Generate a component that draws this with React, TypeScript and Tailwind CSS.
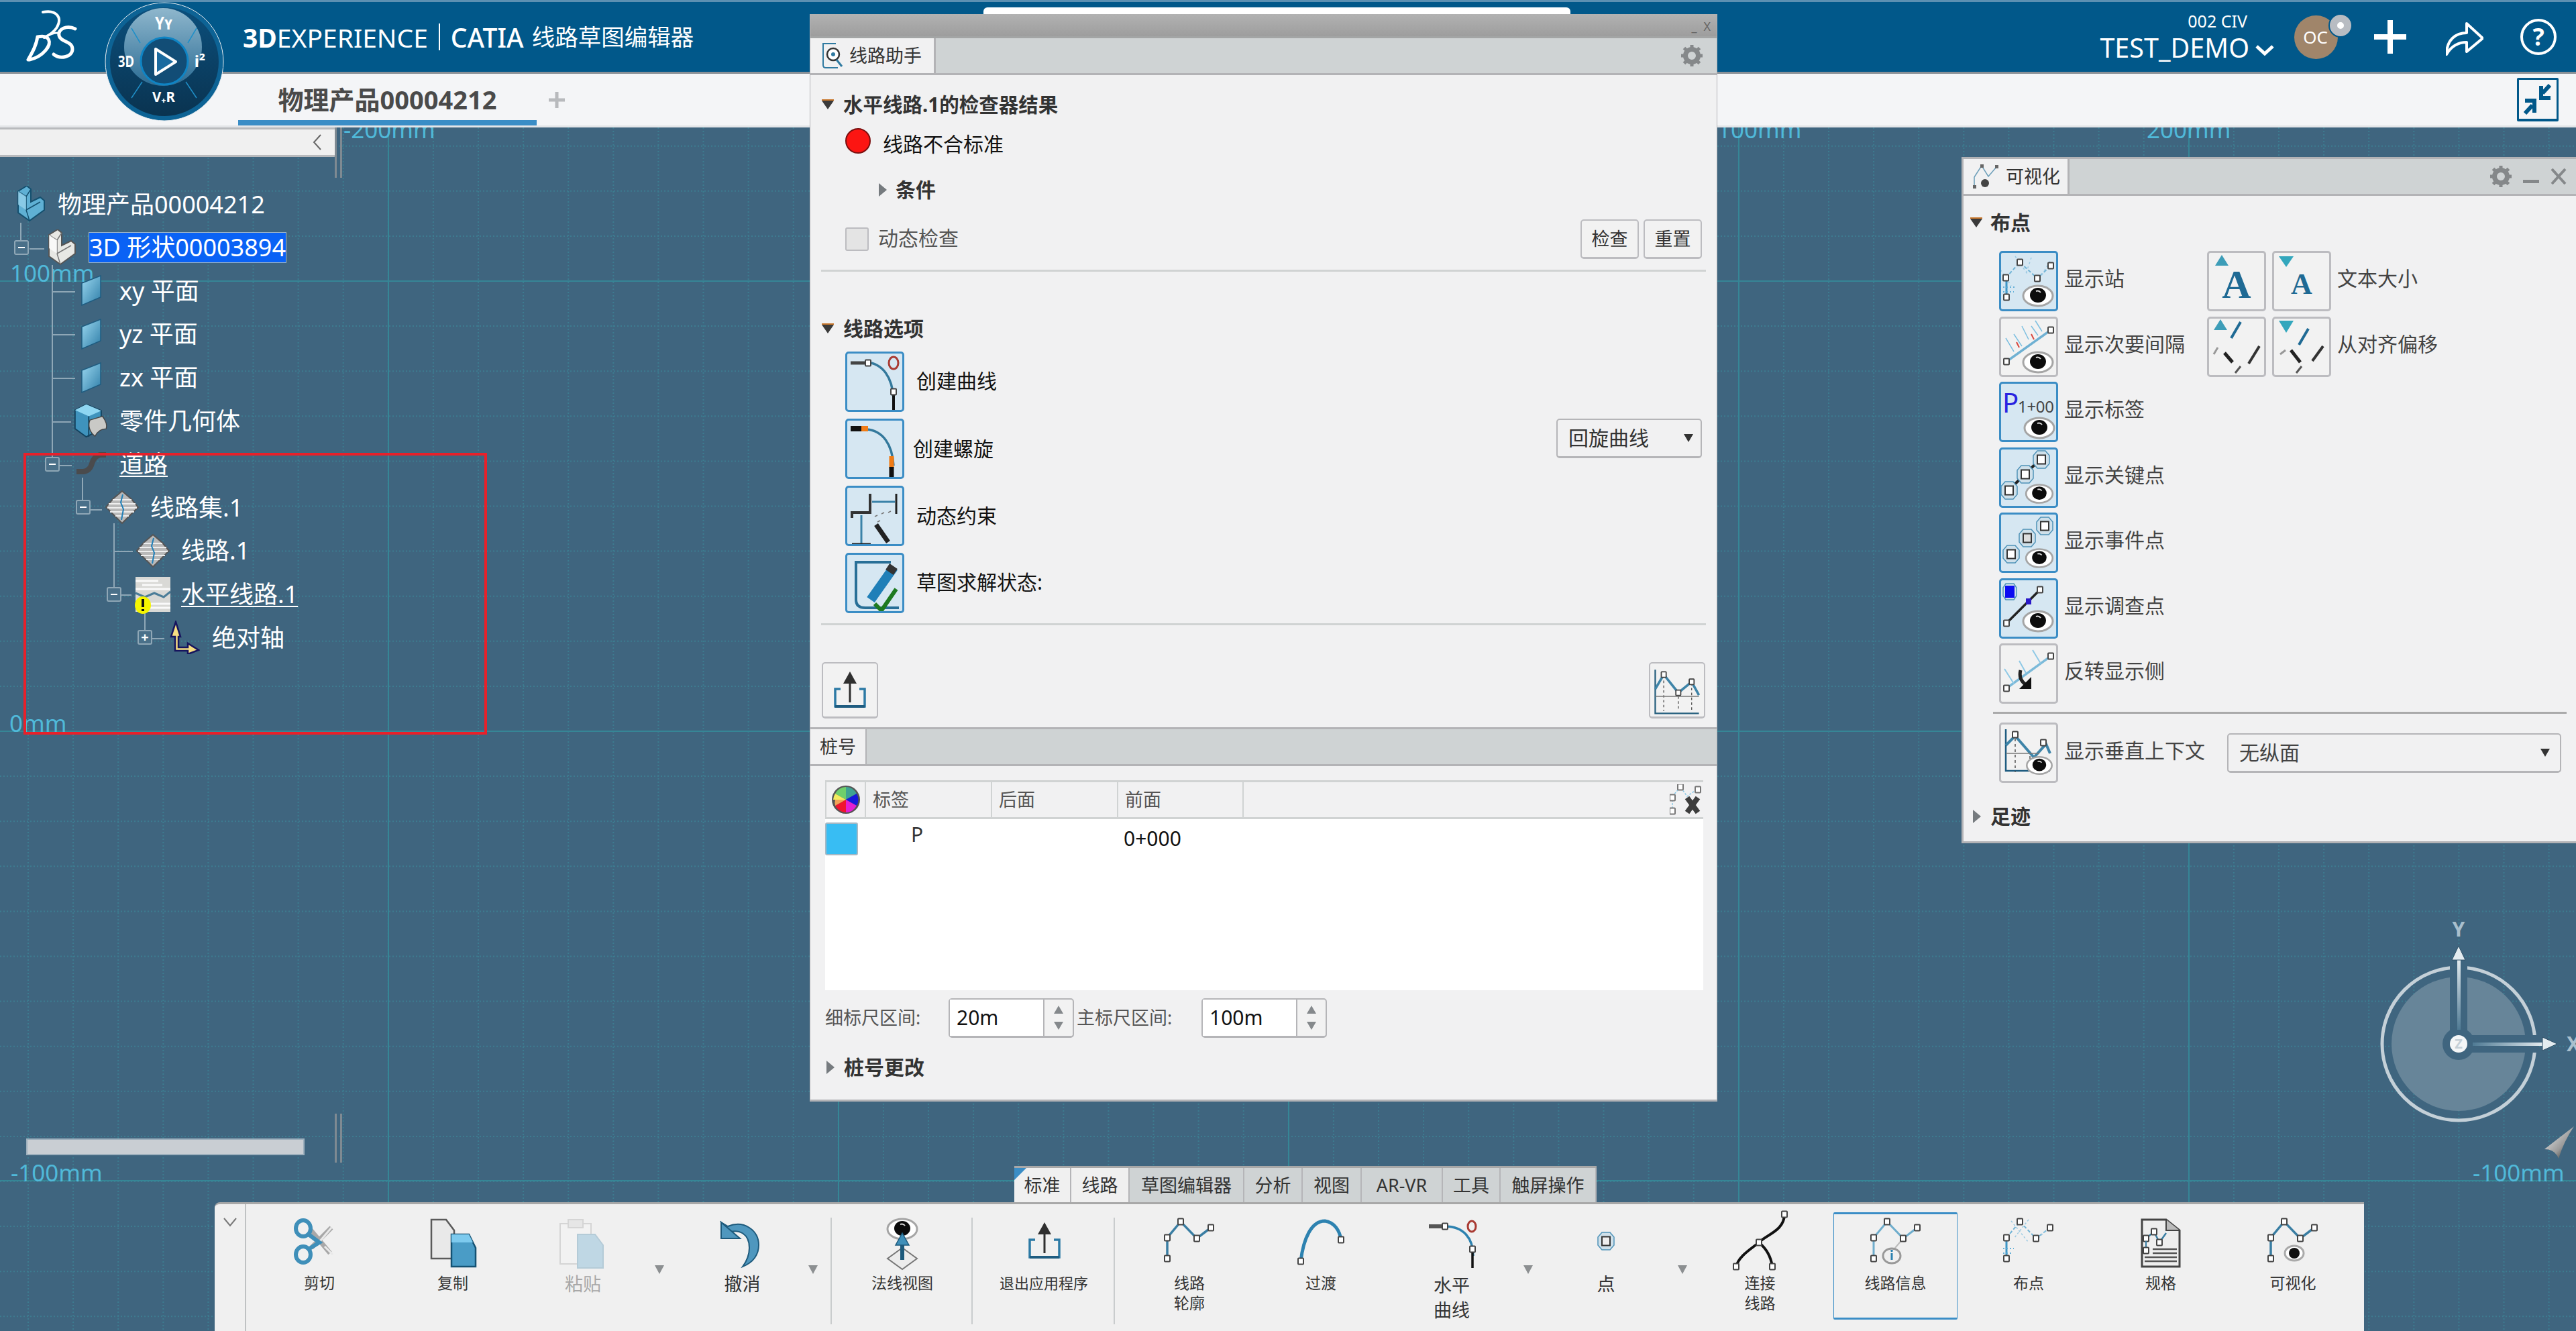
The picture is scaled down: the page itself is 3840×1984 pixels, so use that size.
import React from "react";

// grid of the sketch canvas, page coordinates
const MAJOR_X = [579, 1250, 1921, 2592, 3263];
const MAJOR_Y = [419, 1090, 1760];
const MINOR_X = Array.from({ length: 58 }, (_, i) => 42 + i * 67.1);
const MINOR_Y = Array.from({ length: 30 }, (_, i) => 16.4 + i * 67.1);

const Node = ({ x, y, c = "#444" }: { x: number; y: number; c?: string }) => (
  <rect x={x - 4} y={y - 4.5} width={8} height={9} rx={1} fill="#fff" stroke={c} strokeWidth={2} />
);

const Eye = ({ x, y, s = 1 }: { x: number; y: number; s?: number }) => (
  <g transform={`translate(${x} ${y}) scale(${s})`}>
    <ellipse rx={22} ry={15} fill="#fff" stroke="#a5a5a5" strokeWidth={3} />
    <ellipse cy={-1} rx={12} ry={11} fill="#0c0c0c" />
    <path d="M-3-7a6 6 0 0 1 7 2" stroke="#ddd" fill="none" strokeWidth={2} />
  </g>
);

const Hex = ({ x, y, c = "#fff" }: { x: number; y: number; c?: string }) => (
  <g>
    <path d={`M${x - 6} ${y - 13}h12l6 7v12l-6 7h-12l-6-7v-12z`} fill="#cfe0ea" stroke="#4f93b8" strokeWidth={1.5} />
    <rect x={x - 6} y={y - 6.5} width={12} height={13} fill={c} stroke="#333" strokeWidth={2} />
  </g>
);

const TriDown = () => (
  <svg width="20" height="16" viewBox="0 0 20 16" className="shrink-0">
    <path d="M1 2h18L10 15z" fill="#3a3a3a" />
    <path d="M1 1h18" stroke="#c9772c" strokeWidth="2" />
  </svg>
);

const TriRight = () => (
  <svg width="14" height="22" viewBox="0 0 14 22" className="shrink-0">
    <path d="M1 1l12 10L1 21z" fill="#767b7f" />
  </svg>
);

const Caret = () => (
  <svg width="16" height="14" viewBox="0 0 16 14" className="shrink-0">
    <path d="M1 1h14L8 13z" fill="#333" />
  </svg>
);

const Gear = ({ c = "#85888a" }: { c?: string }) => (
  <svg width="34" height="34" viewBox="0 0 34 34">
    <circle cx="17" cy="17" r="9.5" fill="none" stroke={c} strokeWidth="7" />
    <path d="M17 1v6M17 27v6M1 17h6M27 17h6M5.5 5.5l4 4M24.500 24.500l4 4M5.500 28.500l4-4M24.500 9.500l4-4" stroke={c} strokeWidth="5" />
  </svg>
);

const ChartLines = () => (
  <g fill="none">
    <path d="M6 8v72h72" stroke="#27607f" strokeWidth="2.500" />
    <path d="M20 18v58M44 44v32M66 30v46" stroke="#555" strokeWidth="1.500" strokeDasharray="4 4" />
    <path d="M6 40L20 16 44 46 66 28 78 50" stroke="#3e84a8" strokeWidth="4" />
    <path d="M6 52h72" stroke="#777" strokeWidth="1.500" />
    <Node x={20} y={16} />
    <Node x={44} y={46} />
    <Node x={66} y={28} />
  </g>
);

// ---- assistant panel icons ----
const CurveIcon = ({ orange }: { orange?: boolean }) => (
  <svg viewBox="3 3 82 84" className="block h-full w-full">
    <path d="M32 16c24 2 38 22 40 54" fill="none" stroke="#34799c" strokeWidth="3.500" />
    {orange ? (
      <g>
        <path d="M8 15h20" stroke="#111" strokeWidth="8" />
        <path d="M24 15h10" stroke="#f07c16" strokeWidth="8" />
        <path d="M69 56v18" stroke="#f07c16" strokeWidth="7" />
        <path d="M69 72v20" stroke="#111" strokeWidth="7" />
      </g>
    ) : (
      <g>
        <path d="M8 17h24" stroke="#444" strokeWidth="5" />
        <Node x={34} y={17} />
        <ellipse cx="72" cy="17" rx="7" ry="9" fill="none" stroke="#a93b33" strokeWidth="3" />
        <path d="M72 64v24" stroke="#111" strokeWidth="4" />
        <Node x={72} y={60} />
      </g>
    )}
  </svg>
);

const ConstraintIcon = () => (
  <svg viewBox="3 3 82 84" className="block h-full w-full" fill="none">
    <path d="M37 12v28H10v8" stroke="#333" strokeWidth="4" />
    <path d="M76 12v30" stroke="#222" strokeWidth="3" />
    <path d="M40 24h34" stroke="#3a82a8" strokeWidth="3" />
    <path d="M24 44v42" stroke="#3a82a8" strokeWidth="3" />
    <path d="M10 88h28" stroke="#222" strokeWidth="5" />
    <path d="M46 58l18 26" stroke="#222" strokeWidth="7" />
    <path d="M44 46l4-2M54 42l4-2M64 40l4-2M48 54l4-2" stroke="#777" strokeWidth="1.500" />
  </svg>
);

const SolveIcon = () => (
  <svg viewBox="3 3 82 84" className="block h-full w-full" fill="none">
    <path d="M68 14H16v56q0 12 14 12h50" stroke="#286f97" strokeWidth="4" />
    <path d="M72 22L38 70" stroke="#1f7fb8" strokeWidth="14" />
    <path d="M72 20l-6 9" stroke="#333" strokeWidth="14" />
    <path d="M44 76l10 10 22-32" stroke="#1e7a20" strokeWidth="6" />
  </svg>
);

const ExitIcon = ({ s = 1 }: { s?: number }) => (
  <svg width={50 * s} height={56 * s} viewBox="0 0 50 56" fill="none">
    <path d="M25 6v40" stroke="#2f2f2f" strokeWidth="3" />
    <path d="M15 18L25 0l10 18z" fill="#2f2f2f" />
    <path d="M11 26H3v26h44V26h-8" stroke="#2d7aa5" strokeWidth="3.500" />
    <path d="M3 52h44" stroke="#1f5c80" strokeWidth="4" />
  </svg>
);

const TabRouteIcon = () => (
  <svg width="36" height="40" viewBox="0 0 36 40" fill="none">
    <path d="M22 2H3v32q0 4 4 4h18" stroke="#2f7aa1" strokeWidth="2" />
    <circle cx="18" cy="18" r="9" fill="#fff" stroke="#333" strokeWidth="2.500" />
    <circle cx="18" cy="18" r="3" fill="#2f7aa1" />
    <path d="M23 26l8 10" stroke="#2f7aa1" strokeWidth="3" />
  </svg>
);

// ---- visualization panel icons ----
const PtsBase = () => (
  <g fill="none">
    <path d="M10 40L31 17l26 24 20-19" stroke="#70b3d6" strokeWidth="2" strokeDasharray="5 3" />
    <path d="M2 28l16 24M24 8l18 26M48 10l-8 24M60 42l18-30" stroke="#9ccae2" strokeWidth="1.500" strokeDasharray="3 4" />
    <path d="M11 40v29" stroke="#3d95c6" strokeWidth="3" />
    <path d="M6 54h18M6 61h16" stroke="#66b0d8" strokeWidth="2" strokeDasharray="2 3" />
    <Node x={10} y={40} />
    <Node x={31} y={17} />
    <Node x={57} y={41} />
    <Node x={77} y={22} />
    <Node x={11} y={69} />
  </g>
);

const viewIcons: Record<string, React.ReactNode> = {
  station: (
    <>
      <PtsBase />
      <Eye x={58} y={67} />
    </>
  ),
  minor: (
    <g fill="none">
      <path d="M11 67L77 20" stroke="#6fb1d3" strokeWidth="3.500" />
      <path d="M10 32l12 20M22 26l12 18M34 14l10 20M48 14l10 14M54 6l10 16" stroke="#7dbfe0" strokeWidth="1.500" />
      <path d="M26 38l4 8M48 26l4 8" stroke="#d8483f" strokeWidth="2" />
      <Node x={11} y={67} />
      <Node x={77} y={20} />
      <Eye x={58} y={68} />
    </g>
  ),
  label: (
    <>
      <text x="5" y="46" fontSize="40" fill="#2a23e0" fontFamily="Noto Sans">P</text>
      <text x="28" y="46" fontSize="24" fill="#444" fontFamily="Noto Sans" textLength="54">1+00</text>
      <Eye x={60} y={69} />
    </>
  ),
  key: (
    <>
      <path d="M15 63L63 16" stroke="#222" strokeWidth="4" />
      <Hex x={63} y={18} />
      <Hex x={39} y={40} />
      <Hex x={15} y={64} />
      <Eye x={60} y={69} s={0.9} />
    </>
  ),
  event: (
    <>
      <Hex x={68} y={20} />
      <Hex x={42} y={38} c="#ddd" />
      <Hex x={18} y={62} />
      <Eye x={60} y={68} s={0.9} />
    </>
  ),
  survey: (
    <g fill="none">
      <path d="M11 67L61 17" stroke="#222" strokeWidth="3.500" />
      <path d="M10 8h12l4 6v12l-4 6H10l-4-6V14z" fill="#cfe0ea" stroke="#4f93b8" strokeWidth="1.500" />
      <rect x="9" y="11" width="14" height="18" fill="#0b0bf2" />
      <rect x="40" y="30" width="8" height="9" fill="#2a18c8" />
      <Node x={11} y={67} />
      <Node x={61} y={17} />
      <Eye x={58} y={64} />
    </g>
  ),
  flip: (
    <g fill="none">
      <path d="M11 67L77 19" stroke="#7cbad9" strokeWidth="3.500" />
      <path d="M8 38l14 22M30 26l10 18M50 10l12 20" stroke="#8fc9e6" strokeWidth="2" />
      <Node x={11} y={67} />
      <Node x={77} y={19} />
      <path d="M32 40q-4 16 12 24" stroke="#222" strokeWidth="5" />
      <path d="M30 68h18V50z" fill="#111" />
    </g>
  ),
  vertical: (
    <g fill="none">
      <path d="M10 10v62h66" stroke="#1f5c80" strokeWidth="2.500" />
      <path d="M24 24v50M46 50v24" stroke="#555" strokeWidth="1.500" strokeDasharray="4 4" />
      <path d="M10 34l14-14 28 32 18-20 6 14" stroke="#3e84a8" strokeWidth="4" />
      <path d="M10 46h50" stroke="#777" strokeWidth="1.500" />
      <Node x={24} y={18} />
      <Node x={66} y={30} />
      <Eye x={60} y={64} s={0.85} />
    </g>
  ),
  bigA: (
    <>
      <path d="M12 22l10-16 10 16z" fill="#3d9db8" />
      <text x="44" y="70" fontSize="60" fontWeight="700" fill="#1f6a94" textAnchor="middle" fontFamily="Liberation Serif">A</text>
    </>
  ),
  smallA: (
    <>
      <path d="M10 8h22L21 24z" fill="#33a7bd" />
      <text x="44" y="64" fontSize="44" fontWeight="700" fill="#1f6a94" textAnchor="middle" fontFamily="Liberation Serif">A</text>
    </>
  ),
  offUp: (
    <g fill="none">
      <path d="M10 20l10-16 10 16z" fill="#3d9db8" />
      <path d="M50 8L36 32" stroke="#1f6a94" strokeWidth="4" />
      <path d="M16 46l-6 10" stroke="#999" strokeWidth="3" />
      <path d="M26 54l12 14" stroke="#222" strokeWidth="5" />
      <path d="M78 44L62 70" stroke="#333" strokeWidth="4" />
      <path d="M50 74L42 84" stroke="#555" strokeWidth="3" />
    </g>
  ),
  offDown: (
    <g fill="none">
      <path d="M10 6h22L21 24z" fill="#33a7bd" />
      <path d="M54 18L40 42" stroke="#1f6a94" strokeWidth="4" />
      <path d="M20 50l-8 6" stroke="#999" strokeWidth="3" />
      <path d="M28 50l14 18" stroke="#222" strokeWidth="5" />
      <path d="M76 44L60 66" stroke="#333" strokeWidth="4" />
      <path d="M44 74L36 84" stroke="#555" strokeWidth="3" />
    </g>
  ),
};

const IconBtn = ({ on, children }: { on?: boolean; children: React.ReactNode }) => (
  <div
    className={
      on
        ? "h-[90px] w-[88px] shrink-0 rounded-[5px] border-[3px] border-[#3b8dc5] bg-[#d6e7f2]"
        : "h-[90px] w-[88px] shrink-0 rounded-[5px] border-[3px] border-[#bcbcc0] bg-[#f2f2f2]"
    }
  >
    {children}
  </div>
);

const ViewBtn = ({ name, on }: { name: string; on?: boolean }) => (
  <IconBtn on={on}>
    <svg viewBox="3 3 82 84" className="block h-full w-full">
      {viewIcons[name]}
    </svg>
  </IconBtn>
);

// ---- toolbar icons ----
const ProfileNodes = () => (
  <>
    <Node x={7} y={29} />
    <Node x={27} y={5} />
    <Node x={51} y={30} />
    <Node x={72} y={14} />
    <Node x={7} y={60} />
  </>
);

const LineProfile = ({ c = "#3a7ea3" }: { c?: string }) => (
  <g fill="none">
    <path d="M7 60V29L27 5l24 25 21-16" stroke={c} strokeWidth="3.500" />
    <ProfileNodes />
  </g>
);

const toolIcons: Record<string, React.ReactNode> = {
  cut: (
    <g fill="none">
      <path d="M58 14L28 44M26 16l30 36" stroke="#a8a8a8" strokeWidth="7" />
      <path d="M58 14L36 40M48 42l12 12" stroke="#e9e9e9" strokeWidth="3" />
      <ellipse cx="16" cy="15" rx="11" ry="12" stroke="#3f8fb9" strokeWidth="6" />
      <ellipse cx="16" cy="54" rx="11" ry="12" stroke="#3f8fb9" strokeWidth="6" />
      <path d="M24 24l16 12-16 10" stroke="#3f8fb9" strokeWidth="6" />
    </g>
  ),
  copy: (
    <g>
      <path d="M8 2h22l12 16v42H8z" fill="#e9e9e9" stroke="#5a5a5a" strokeWidth="2.500" />
      <path d="M38 24h26l10 20v28H38z" fill="#4a9cc6" stroke="#145273" strokeWidth="2.500" />
      <path d="M38 24h26l6 12H38z" fill="#7dcaee" />
    </g>
  ),
  paste: (
    <g opacity="0.5">
      <path d="M6 8h46v60H6z" fill="#f4f4f4" stroke="#bbb" strokeWidth="2" />
      <path d="M18 2h22v12H18z" fill="#ddd" stroke="#bbb" strokeWidth="2" />
      <path d="M32 24h26l12 16v34H32z" fill="#8fc0da" stroke="#7aa7c0" strokeWidth="2" />
    </g>
  ),
  undo: (
    <g>
      <path d="M8 6l6 16c22-8 36 2 36 22 0 12-4 20-10 28 16-6 24-18 24-32C64 18 42 2 18 12z" fill="#4f97be" stroke="#1d5a7c" strokeWidth="2" />
      <path d="M8 6v24h28z" fill="#4f97be" stroke="#1d5a7c" strokeWidth="2" />
    </g>
  ),
  normal: (
    <g>
      <Eye x={40} y={16} s={1} />
      <path d="M40 44L18 60l22 16 22-16z" fill="#ececec" stroke="#777" strokeWidth="2" />
      <path d="M40 62V28" stroke="#1d5a7c" strokeWidth="6" />
      <path d="M30 40l10-18 10 18z" fill="#3f8fb9" stroke="#1d5a7c" strokeWidth="1.500" />
    </g>
  ),
  exit: (
    <g transform="translate(16 6)">
      <path d="M25 6v40" stroke="#2f2f2f" strokeWidth="3" />
      <path d="M15 18L25 0l10 18z" fill="#2f2f2f" />
      <path d="M11 26H3v26h44V26h-8" stroke="#2d7aa5" strokeWidth="3.500" fill="none" />
      <path d="M3 52h44" stroke="#1f5c80" strokeWidth="4" />
    </g>
  ),
  curve: (
    <g fill="none">
      <path d="M10 64C14 30 26 4 46 4c14 2 22 14 24 28" stroke="#2d82b0" strokeWidth="5" />
      <Node x={10} y={64} />
      <Node x={70} y={32} />
    </g>
  ),
  hcurve: (
    <g fill="none">
      <path d="M6 12h24" stroke="#555" strokeWidth="6" />
      <path d="M30 12c28 0 42 18 42 44" stroke="#2d82b0" strokeWidth="3.500" />
      <Node x={30} y={12} />
      <ellipse cx="70" cy="12" rx="6" ry="8" stroke="#a93b33" strokeWidth="3" />
      <path d="M71 50v24" stroke="#111" strokeWidth="3.500" />
      <Node x={71} y={46} />
    </g>
  ),
  point: <Hex x={40} y={34} c="#eee" />,
  connect: (
    <g fill="none">
      <path d="M76 -6c0 24-26 30-38 42C26 46 8 56 4 72" stroke="#111" strokeWidth="4" />
      <path d="M38 36c12 10 18 22 20 36" stroke="#111" strokeWidth="4" />
      <Node x={76} y={-6} />
      <Node x={38} y={36} />
      <Node x={4} y={72} />
      <Node x={58} y={72} />
    </g>
  ),
  info: (
    <g fill="none">
      <path d="M7 60V29L27 5l24 25 21-16" stroke="#6fadcc" strokeWidth="3" />
      <path d="M51 30L34 50" stroke="#bbb" strokeWidth="2" />
      <ProfileNodes />
      <ellipse cx="34" cy="56" rx="13" ry="11" fill="#f0f0f0" stroke="#999" strokeWidth="3" />
      <path d="M34 52v10" stroke="#2d82b0" strokeWidth="3" />
      <circle cx="34" cy="48.500" r="1.800" fill="#2d82b0" />
    </g>
  ),
  layout: (
    <g fill="none">
      <path d="M7 29L27 5l24 25 21-16" stroke="#70b3d6" strokeWidth="2" strokeDasharray="5 3" />
      <path d="M14 4l26 32M40 2L18 30M50 34l22-22" stroke="#9ccae2" strokeWidth="1.500" strokeDasharray="3 3" />
      <path d="M7 34v26" stroke="#3d95c6" strokeWidth="3" />
      <path d="M2 45h16M2 52h14" stroke="#66b0d8" strokeWidth="2" strokeDasharray="2 3" />
      <ProfileNodes />
    </g>
  ),
  spec: (
    <g fill="none">
      <path d="M12 2h36l20 16v54H12z" fill="#eeeeee" stroke="#444" strokeWidth="3" />
      <path d="M48 2v16h20" fill="#bbb" stroke="#444" strokeWidth="2" />
      <path d="M18 30l12-10 8 16 10-14" stroke="#3a7ea3" strokeWidth="2.500" />
      <Node x={18} y={30} />
      <Node x={30} y={20} />
      <Node x={38} y={36} />
      <path d="M18 34v14" stroke="#3a7ea3" strokeWidth="2" />
      <Node x={18} y={48} />
      <path d="M28 46h36M28 52h36M16 58h48M16 64h48" stroke="#555" strokeWidth="2.500" />
    </g>
  ),
  viz: (
    <>
      <LineProfile />
      <ellipse cx="42" cy="52" rx="14" ry="11" fill="#fff" stroke="#aaa" strokeWidth="3" />
      <ellipse cx="42" cy="52" rx="8" ry="8" fill="#111" />
    </>
  ),
};

type Tool = { w: string; icon: React.ReactNode; lines: string[]; text: string; sep?: boolean };

const tools: Tool[] = [
  { w: "w-[218px]", icon: toolIcons.cut, lines: ["剪切"], text: "text-[23px] leading-[30px] text-[#333]" },
  { w: "w-[180px]", icon: toolIcons.copy, lines: ["复制"], text: "text-[23px] leading-[30px] text-[#333]" },
  { w: "w-[208px]", icon: toolIcons.paste, lines: ["粘贴"], text: "text-[27px] leading-[34px] text-[#a8a8a8]" },
  { w: "w-[267px]", icon: toolIcons.undo, lines: ["撤消"], text: "text-[27px] leading-[34px] text-[#333]", sep: true },
  { w: "w-[210px]", icon: toolIcons.normal, lines: ["法线视图"], text: "text-[23px] leading-[30px] text-[#333]", sep: true },
  { w: "w-[212px]", icon: toolIcons.exit, lines: ["退出应用程序"], text: "mt-[4px] text-[22px] leading-[30px] text-[#333]", sep: true },
  { w: "w-[222px]", icon: <LineProfile />, lines: ["线路", "轮廓"], text: "text-[23px] leading-[30px] text-[#333]" },
  { w: "w-[170px]", icon: toolIcons.curve, lines: ["过渡"], text: "text-[23px] leading-[30px] text-[#333]" },
  { w: "w-[220px]", icon: toolIcons.hcurve, lines: ["水平", "曲线"], text: "text-[27px] leading-[37px] text-[#333]" },
  { w: "w-[240px]", icon: toolIcons.point, lines: ["点"], text: "text-[27px] leading-[34px] text-[#333]" },
  { w: "w-[219px]", icon: toolIcons.connect, lines: ["连接", "线路"], text: "text-[23px] leading-[30px] text-[#333]" },
];

const toolsRight: Tool[] = [
  { w: "w-[212px]", icon: toolIcons.layout, lines: ["布点"], text: "text-[23px] leading-[30px] text-[#333]" },
  { w: "w-[182px]", icon: toolIcons.spec, lines: ["规格"], text: "text-[23px] leading-[30px] text-[#333]" },
  { w: "w-[212px]", icon: toolIcons.viz, lines: ["可视化"], text: "text-[23px] leading-[30px] text-[#333]" },
];

const ToolItem = ({ t }: { t: Tool }) => (
  <div className={`${t.w} relative flex h-full shrink-0 flex-col items-center pt-[21px]`}>
    <svg width="80" height="76" viewBox="0 0 80 76" className="block overflow-visible">
      {t.icon}
    </svg>
    <div className={`mt-[5px] flex flex-col items-center ${t.text}`}>
      {t.lines.map((l) => (
        <span key={l}>{l}</span>
      ))}
    </div>
  </div>
);

const SmallCaret = () => (
  <svg width="16" height="16" viewBox="0 0 16 16" className="absolute">
    <path d="M1 2h14L8 15z" fill="#8c8f91" />
  </svg>
);

// ---- tree ----
const Chair = ({ white }: { white?: boolean }) => (
  <svg width="46" height="54" viewBox="0 0 46 54">
    <path d="M6 8L19 0l6 5v19l14-7 6 5v14L23 52 6 40z" fill={white ? "#e8e8e4" : "#5fb0d4"} stroke={white ? "#555" : "#14506f"} strokeWidth="2" />
    <path d="M6 8l12 8v20l5 16M18 16l7-11M18 36l21-12" fill="none" stroke={white ? "#777" : "#14506f"} strokeWidth="1.500" />
    <path d="M18 16v20l-12-8V8z" fill={white ? "#fff" : "#9bd6ee"} opacity="0.7" />
  </svg>
);

const PlaneIcon = () => (
  <svg width="34" height="46" viewBox="0 0 34 46">
    <defs>
      <linearGradient id="pl" x1="0" y1="0" x2="1" y2="1">
        <stop offset="0" stopColor="#9bd8f0" />
        <stop offset="1" stopColor="#2f7ea8" />
      </linearGradient>
    </defs>
    <path d="M3 12L31 1v32L3 45z" fill="url(#pl)" stroke="#1f5c80" strokeWidth="1.500" />
  </svg>
);

const BodyIcon = () => (
  <svg width="56" height="54" viewBox="0 0 56 54">
    <path d="M2 10L20 1l24 10v30L20 53 2 40z" fill="#3f93bd" stroke="#12425e" strokeWidth="2" />
    <path d="M2 10l22 10 20-9-24-10z" fill="#8fd6f2" />
    <path d="M24 20v33" stroke="#12425e" strokeWidth="2" />
    <path d="M26 26l20-6c6 8 8 14 6 20-8 0-14 4-18 12-8-6-12-16-8-26z" fill="#c9c9c6" stroke="#444" strokeWidth="1.500" />
  </svg>
);

const RoadIcon = () => (
  <svg width="52" height="38" viewBox="0 0 52 38" fill="none">
    <path d="M4 30h10q10-1 13-12 3-11 12-13h9" stroke="#4a4b4d" strokeWidth="8" />
    <path d="M36 4h13" stroke="#7e8284" strokeWidth="4" />
  </svg>
);

const LeafIcon = () => (
  <svg width="52" height="50" viewBox="0 0 52 50" fill="none">
    <path d="M26 1l14 12 10 12-10 10-14 14-14-14L2 25l10-12z" fill="#b9b9b9" stroke="#555" strokeWidth="2" />
    <path d="M6 20h40M4 26h44M8 32h36M12 14h28M16 38h20" stroke="#eee" strokeWidth="2" />
    <path d="M27 6l-3 12 4 10-3 16" stroke="#1f7fb8" strokeWidth="2" />
  </svg>
);

const AlignIcon = () => (
  <div className="relative h-[52px] w-[52px]">
    <svg width="52" height="52" viewBox="0 0 52 52" fill="none">
      <rect width="52" height="52" fill="#d9d9d6" />
      <path d="M0 6h34M10 12h30M0 18h52M0 40h52M12 46h40" stroke="#fafafa" strokeWidth="3" />
      <path d="M0 24l14 6 14-6 14 6 10-8" stroke="#4b7d98" strokeWidth="3" />
    </svg>
    <svg width="26" height="28" viewBox="0 0 26 28" className="absolute bottom-[-4px] left-[-2px]">
      <ellipse cx="13" cy="14" rx="12" ry="13" fill="#f5f500" />
      <path d="M13 5v12" stroke="#111" strokeWidth="4" />
      <path d="M13 20v3" stroke="#111" strokeWidth="4" />
    </svg>
  </div>
);

const AxisIcon = () => (
  <svg width="48" height="50" viewBox="0 0 48 50">
    <path d="M12 2l7 22h-3v16h14v-6l16 10-16 6v-5H11V24H5z" fill="#f7de83" stroke="#16145e" strokeWidth="2.500" />
  </svg>
);

type Row = { d: number; box?: "-" | "+"; icon: React.ReactNode; label: string; cls?: string };

const rows: Row[] = [
  { d: 0, icon: <Chair />, label: "物理产品00004212" },
  { d: 1, box: "-", icon: <Chair white />, label: "3D 形状00003894", cls: "border border-[#9fb6c6] bg-[#0a62f5] h-[46px] flex items-center" },
  { d: 2, icon: <PlaneIcon />, label: "xy 平面" },
  { d: 2, icon: <PlaneIcon />, label: "yz 平面" },
  { d: 2, icon: <PlaneIcon />, label: "zx 平面" },
  { d: 2, icon: <BodyIcon />, label: "零件几何体" },
  { d: 2, box: "-", icon: <RoadIcon />, label: "道路", cls: "underline decoration-2 underline-offset-4" },
  { d: 3, box: "-", icon: <LeafIcon />, label: "线路集.1" },
  { d: 4, icon: <LeafIcon />, label: "线路.1" },
  { d: 4, box: "-", icon: <AlignIcon />, label: "水平线路.1", cls: "underline decoration-2 underline-offset-4" },
  { d: 5, box: "+", icon: <AxisIcon />, label: "绝对轴" },
];

const TreeBox = ({ sign }: { sign?: "-" | "+" }) => (
  <div className={sign ? "flex h-[22px] w-[22px] shrink-0 items-center justify-center rounded-[3px] border-2 border-[#8fa7b6] bg-[#4a7089]" : "h-[22px] w-[22px] shrink-0"}>
    {sign === "-" && <div className="h-[2px] w-[10px] bg-white" />}
    {sign === "+" && <div className="text-[20px] font-bold leading-none text-white">+</div>}
  </div>
);

const Tree = () => (
  <div className="absolute left-0 top-[272px] text-[36px] leading-[1.2] text-white">
    <svg className="absolute left-0 top-0" width="400" height="720" viewBox="0 272 400 720" fill="none" stroke="#8fa7b6" strokeWidth="2">
      <path d="M31 332v28M44 371h22M78 395v288M78 435h34M78 499h34M78 564h34M78 629h28M89 694h18M123 712v37M135 760h17M170 780v97M170 822h28M181 887h15M216 910v31M227 952h18" />
    </svg>
    {rows.map((r) => (
      <div key={r.label} className="relative flex h-[64.6px] items-center" style={{ marginLeft: 46 * r.d - 25 }}>
        <TreeBox sign={r.box} />
        <div className="ml-[21px] flex w-[52px] shrink-0 items-center justify-center">{r.icon}</div>
        <div className={`ml-[16px] whitespace-nowrap ${r.cls ?? ""}`}>{r.label}</div>
      </div>
    ))}
  </div>
);

// ---- canvas bits ----
const Ruler = ({ cls, text }: { cls: string; text: string }) => (
  <div className={`absolute text-[35px] leading-none text-[#50b9d9] ${cls}`}>{text}</div>
);

const CompassLogo = () => (
  <svg className="absolute left-[150px] top-0" width="190" height="186" viewBox="150 0 190 186">
    <defs>
      <linearGradient id="lens" x1="0" y1="0" x2="0" y2="1">
        <stop offset="0" stopColor="#8fb7cd" />
        <stop offset="1" stopColor="#2b6c94" />
      </linearGradient>
      <linearGradient id="disc" x1="0" y1="0" x2="0" y2="1">
        <stop offset="0" stopColor="#0b4f7c" />
        <stop offset="1" stopColor="#0a3350" />
      </linearGradient>
    </defs>
    <circle cx="245" cy="92" r="88" fill="#0d6395" stroke="#e9edf0" strokeWidth="1" />
    <circle cx="245" cy="92" r="81" fill="url(#disc)" />
    <circle cx="243" cy="70" r="58" fill="url(#lens)" />
    <path d="M196 42l13 22M293 42l-13 22M212 122l-16 24M277 122l16 24" stroke="#1f8fc8" strokeWidth="1.500" />
    <circle cx="245" cy="91" r="35" fill="#124d76" stroke="#0f84c4" strokeWidth="3" />
    <path d="M232 73v38l30-19z" fill="#1a6a9f" stroke="#fff" strokeWidth="4" strokeLinejoin="round" />
    <text x="188" y="100" fontSize="24" fontWeight="700" fill="#fff" textAnchor="middle" fontFamily="Noto Sans" textLength="24" lengthAdjust="spacingAndGlyphs">3D</text>
    <text x="298" y="100" fontSize="24" fontWeight="700" fill="#fff" textAnchor="middle" fontFamily="Noto Sans">i²</text>
    <text x="244" y="152" fontSize="22" fontWeight="700" fill="#fff" textAnchor="middle" fontFamily="Noto Sans" textLength="34" lengthAdjust="spacingAndGlyphs">V₊R</text>
    <text x="244" y="44" fontSize="26" fontWeight="700" fill="#fff" textAnchor="middle" fontFamily="Noto Sans" textLength="26" lengthAdjust="spacingAndGlyphs">Yʏ</text>
  </svg>
);

const DsLogo = () => (
  <svg width="82" height="80" viewBox="0 0 82 80" fill="none" stroke="#fff" strokeLinecap="round" className="shrink-0">
    <path d="M26 3c20-4 30 8 20 24-4 6-10 10-18 14" strokeWidth="4" />
    <path d="M4 74c8-14 12-22 14-34 18-4 22 8 12 20-6 7-14 12-24 14" strokeWidth="5" />
    <path d="M30 40c6-4 12-6 18-6" strokeWidth="3" />
    <path d="M74 28c-12-6-26 0-24 10 2 10 20 8 20 20 0 12-18 16-28 8" strokeWidth="5" />
  </svg>
);

const Compass = () => (
  <svg className="absolute left-[3500px] top-[1350px]" width="340" height="390" viewBox="3500 1350 340 390" fill="none">
    <defs>
      <linearGradient id="yarm" x1="0" y1="1" x2="0" y2="0">
        <stop offset="0" stopColor="#4f7a94" />
        <stop offset="1" stopColor="#e4ecf0" />
      </linearGradient>
      <linearGradient id="xarm" x1="0" y1="0" x2="1" y2="0">
        <stop offset="0" stopColor="#4f7a94" />
        <stop offset="1" stopColor="#e4ecf0" />
      </linearGradient>
      <linearGradient id="cur" x1="0" y1="0" x2="1" y2="1">
        <stop offset="0" stopColor="#f4f4f4" />
        <stop offset="0.6" stopColor="#9a9a9a" />
        <stop offset="1" stopColor="#111" />
      </linearGradient>
    </defs>
    <circle cx="3665" cy="1556" r="100" fill="#678599" />
    <circle cx="3665" cy="1556" r="114" stroke="#c4d0d8" strokeWidth="5" />
    <rect x="3652" y="1430" width="26" height="126" fill="#3f657f" />
    <rect x="3665" y="1543" width="120" height="26" fill="#3f657f" />
    <circle cx="3665" cy="1556" r="24" fill="#3f657f" />
    <rect x="3663" y="1430" width="5" height="105" fill="url(#yarm)" />
    <path d="M3655 1431l10-21 10 21z" fill="#e4ecf0" stroke="#2e4f66" strokeWidth="1" />
    <rect x="3686" y="1554" width="105" height="5" fill="url(#xarm)" />
    <path d="M3790 1546l22 10-22 10z" fill="#e4ecf0" stroke="#2e4f66" strokeWidth="1" />
    <circle cx="3665" cy="1556" r="13" fill="#f4f6f7" />
    <text x="3665" y="1563" fontSize="20" fontWeight="700" fill="#c5d0d7" textAnchor="middle" fontFamily="Noto Sans">Z</text>
    <text x="3665" y="1396" fontSize="30" fontWeight="700" fill="#a9bfcd" textAnchor="middle" fontFamily="Noto Sans">Y</text>
    <text x="3826" y="1567" fontSize="30" fontWeight="700" fill="#a9bfcd" fontFamily="Noto Sans">X</text>
    <path d="M3837 1679l-44 34q16 0 21 14 8-26 23-48z" fill="url(#cur)" />
  </svg>
);

const SmallBtn = ({ cls, children }: { cls: string; children: React.ReactNode }) => (
  <div className={`flex items-center justify-center rounded-[5px] border-2 border-b-[3px] border-[#bcbcc0] bg-[#f2f2f2] ${cls}`}>{children}</div>
);

const Spin = ({ value }: { value: string }) => (
  <div className="flex h-[59px] w-[187px] shrink-0 rounded-[5px] border-2 border-b-[3px] border-[#b5b5b8] bg-[#f2f2f2]">
    <div className="flex w-[139px] items-center bg-white pl-[10px] text-[30px] text-[#111]">{value}</div>
    <div className="flex flex-1 flex-col items-center justify-center gap-[10px] border-l-2 border-[#b5b5b8]">
      <svg width="16" height="14" viewBox="0 0 16 14"><path d="M8 1l7 12H1z" fill="#85898c" /></svg>
      <svg width="16" height="14" viewBox="0 0 16 14"><path d="M8 13L1 1h14z" fill="#85898c" /></svg>
    </div>
  </div>
);

const assistantRows: { icon: React.ReactNode; label: string; cls: string; extra?: boolean }[] = [
  { icon: <CurveIcon />, label: "创建曲线", cls: "ml-[18px] pb-[2px]" },
  { icon: <CurveIcon orange />, label: "创建螺旋", cls: "ml-[13px]", extra: true },
  { icon: <ConstraintIcon />, label: "动态约束", cls: "ml-[18px]" },
  { icon: <SolveIcon />, label: "草图求解状态:", cls: "ml-[18px] pb-[2px]" },
];

const AssistantPanel = () => (
  <div className="absolute left-[1207px] top-[21px] flex h-[1621px] w-[1353px] flex-col border-x border-b-[3px] border-[#b3b3b6] bg-[#f1f1f2] text-[30px] leading-[1.2] text-[#333]">
    <div className="flex h-[33px] shrink-0 items-end justify-end gap-[10px] bg-gradient-to-b from-[#b2b2b2] to-[#9d9d9d] pr-[9px] text-[18px] leading-[30px] text-[#666]">
      <span>_</span>
      <span>X</span>
    </div>
    <div className="flex h-[58px] shrink-0 items-stretch border-y-[3px] border-b-[3px] border-t-[#a3a5a5] border-b-[#b3b3b6] bg-[#cfd3d4]">
      <div className="flex w-[187px] items-center gap-[6px] border-r-[3px] border-[#b3b3b6] bg-[#f1f1f2] pl-[16px] text-[27px]">
        <TabRouteIcon />
        线路助手
      </div>
      <div className="ml-auto flex items-center pr-[20px]">
        <Gear />
      </div>
    </div>

    <div className="ml-[16px] mt-[24px] flex h-[40px] shrink-0 items-center gap-[13px] font-bold">
      <TriDown />
      <span className="text-[29.500px]">水平线路.1的检查器结果</span>
    </div>
    <div className="ml-[52px] mt-[12px] flex h-[44px] shrink-0 items-center gap-[18px] text-[#111]">
      <div className="h-[38px] w-[38px] rounded-full border-2 border-[#7a1010] bg-[#fc1512]" />
      <span className="pt-[10px]">线路不合标准</span>
    </div>
    <div className="ml-[101px] mt-[31px] flex h-[40px] shrink-0 items-center gap-[12px] font-bold">
      <TriRight />
      条件
    </div>
    <div className="ml-[52px] mr-[22px] mt-[24px] flex h-[59px] shrink-0 items-center">
      <div className="h-[35px] w-[35px] rounded-[3px] border-2 border-[#bcbcc0] bg-[#e4e4e4]" />
      <span className="ml-[14px] pb-[4px] text-[#555]">动态检查</span>
      <SmallBtn cls="ml-auto h-[59px] w-[87px] text-[27px]">检查</SmallBtn>
      <SmallBtn cls="ml-[7px] h-[59px] w-[87px] text-[27px]">重置</SmallBtn>
    </div>
    <div className="ml-[16px] mr-[16px] mt-[16px] h-[3px] shrink-0 bg-[#d0d3d3]" />

    <div className="ml-[16px] mt-[65px] flex h-[40px] shrink-0 items-center gap-[13px] font-bold">
      <TriDown />
      线路选项
    </div>
    <div className="ml-[52px] mr-[22px] mt-[14px] flex shrink-0 flex-col gap-[10px]">
      {assistantRows.map((r) => (
        <div key={r.label} className="flex h-[90px] items-center text-[#111]">
          <IconBtn on>{r.icon}</IconBtn>
          <span className={r.cls}>{r.label}</span>
          {r.extra && (
            <div className="ml-auto flex h-[59px] w-[217px] items-center justify-between self-start rounded-[5px] border-2 border-b-[3px] border-[#b5b5b8] pl-[16px] pr-[10px] text-[#333]">
              回旋曲线
              <Caret />
            </div>
          )}
        </div>
      ))}
    </div>
    <div className="ml-[16px] mr-[16px] mt-[15px] h-[3px] shrink-0 bg-[#d0d3d3]" />

    <div className="ml-[17px] mr-[17px] mt-[55px] flex h-[84px] shrink-0 justify-between">
      <SmallBtn cls="h-[84px] w-[84px]">
        <ExitIcon />
      </SmallBtn>
      <SmallBtn cls="h-[84px] w-[84px]">
        <svg width="76" height="76" viewBox="0 0 84 84">
          <ChartLines />
        </svg>
      </SmallBtn>
    </div>

    <div className="mt-[13px] flex h-[58px] shrink-0 border-y-[3px] border-[#b3b3b6] bg-[#cfd3d4]">
      <div className="flex w-[84px] items-center justify-center border-r-2 border-[#b3b3b6] bg-[#f1f1f2] text-[27px]">桩号</div>
    </div>

    <div className="ml-[22px] mr-[20px] mt-[21px] flex h-[58px] shrink-0 border-y-[3px] border-[#d0d3d3] text-[27px] text-[#555]">
      <div className="flex w-[61px] items-center justify-center border-x-2 border-[#d0d3d3]">
        <svg width="44" height="44" viewBox="0 0 44 44">
          <circle cx="22" cy="22" r="21" fill="#555" />
          <path d="M22 22V3A19 19 0 0 0 6 13z" fill="#6fcf6b" />
          <path d="M22 22V3a19 19 0 0 1 16 10z" fill="#3fa392" />
          <path d="M22 22l16-9a19 19 0 0 1 0 18z" fill="#1717dc" />
          <path d="M22 22l16 9a19 19 0 0 1-16 10z" fill="#e41fd2" />
          <path d="M22 22v19a19 19 0 0 1-16-10z" fill="#f01530" />
          <path d="M22 22L6 31a19 19 0 0 1 0-9z" fill="#f2a457" />
          <path d="M22 22H3a19 19 0 0 1 3-9z" fill="#f4ec5e" />
        </svg>
      </div>
      <div className="flex w-[188px] items-center border-r-2 border-[#d0d3d3] pl-[10px]">标签</div>
      <div className="flex w-[188px] items-center border-r-2 border-[#d0d3d3] pl-[10px]">后面</div>
      <div className="flex w-[187px] items-center border-r-2 border-[#d0d3d3] pl-[10px]">前面</div>
      <div className="ml-auto flex items-center pr-[2px]">
        <svg width="48" height="46" viewBox="0 0 48 46" fill="none">
          <path d="M4 18L16 4l10 14 14-10M4 18v20" stroke="#8cc9e6" strokeWidth="1.500" strokeDasharray="3 2" />
          <Node x={4} y={20} c="#777" />
          <Node x={16} y={4} c="#777" />
          <Node x={42} y={8} c="#777" />
          <Node x={4} y={40} c="#777" />
          <path d="M26 20l16 22M42 20L26 42" stroke="#3d3d3d" strokeWidth="8" />
        </svg>
      </div>
    </div>
    <div className="ml-[22px] mr-[20px] flex h-[255px] shrink-0 items-start bg-white pt-[5px] text-[30px] text-[#111]">
      <div className="h-[49px] w-[49px] rounded-[3px] border-2 border-[#a6b8c4] bg-[#38bdf3]" />
      <div className="w-[188px] pl-[79px] text-[#333]">P</div>
      <div className="ml-[10px] w-[188px]" />
      <div className="pl-[10px] pt-[6px]">0+000</div>
    </div>

    <div className="ml-[22px] mt-[12px] flex h-[59px] shrink-0 items-center text-[27px] text-[#555]">
      <span className="w-[184px]">细标尺区间:</span>
      <Spin value="20m" />
      <span className="ml-[4px] w-[186px]">主标尺区间:</span>
      <Spin value="100m" />
    </div>
    <div className="ml-[23px] mt-[24px] flex h-[40px] shrink-0 items-center gap-[13px] font-bold">
      <TriRight />
      桩号更改
    </div>
  </div>
);

const viewRows: { name: string; on?: boolean; label: string; second?: [string, string, string] }[] = [
  { name: "station", on: true, label: "显示站", second: ["bigA", "smallA", "文本大小"] },
  { name: "minor", label: "显示次要间隔", second: ["offUp", "offDown", "从对齐偏移"] },
  { name: "label", on: true, label: "显示标签" },
  { name: "key", on: true, label: "显示关键点" },
  { name: "event", on: true, label: "显示事件点" },
  { name: "survey", on: true, label: "显示调查点" },
  { name: "flip", label: "反转显示侧" },
];

const VisualPanel = () => (
  <div className="absolute left-[2924px] top-[234px] flex h-[1023px] w-[916px] flex-col border-l-[3px] border-t-[3px] border-b-[3px] border-[#b3b3b6] bg-[#f1f1f2] text-[30px] leading-[1.2] text-[#444]">
    <div className="flex h-[55px] shrink-0 border-b-[3px] border-[#b3b3b6] bg-[#cfd3d4]">
      <div className="flex w-[158px] items-center gap-[10px] border-r-[3px] border-[#b3b3b6] bg-[#f1f1f2] pl-[13px] text-[27px] text-[#333]">
        <svg width="40" height="38" viewBox="0 0 40 38" fill="none">
          <path d="M3 20L14 3l10 16 12-14M3 20v14" stroke="#6a9db8" strokeWidth="1.500" />
          <rect x="1" y="32" width="5" height="5" fill="#666" />
          <rect x="12" y="1" width="5" height="5" fill="#666" />
          <rect x="34" y="2" width="5" height="5" fill="#666" />
          <circle cx="19" cy="29" r="6" fill="#444" />
        </svg>
        可视化
      </div>
      <div className="ml-auto flex items-center gap-[16px] pr-[13px] text-[#85888a]">
        <Gear />
        <div className="mt-[14px] h-[5px] w-[24px] bg-[#85888a]" />
        <svg width="26" height="26" viewBox="0 0 26 26">
          <path d="M3 2l20 22M23 2L3 24" stroke="#85888a" strokeWidth="4" />
        </svg>
      </div>
    </div>

    <div className="ml-[9px] mt-[20px] flex h-[40px] shrink-0 items-center gap-[11px] font-bold text-[#333]">
      <TriDown />
      布点
    </div>
    <div className="ml-[53px] mt-[22px] flex shrink-0 flex-col gap-[7.500px]">
      {viewRows.map((r) => (
        <div key={r.name} className="flex h-[90px] items-center">
          <ViewBtn name={r.name} on={r.on} />
          <span className="w-[222px] shrink-0 whitespace-nowrap pb-[8px] pl-[9px]">{r.label}</span>
          {r.second && (
            <>
              <ViewBtn name={r.second[0]} />
              <div className="ml-[9px]">
                <ViewBtn name={r.second[1]} />
              </div>
              <span className="ml-[9px] pb-[8px]">{r.second[2]}</span>
            </>
          )}
        </div>
      ))}
    </div>
    <div className="ml-[44px] mr-[14px] mt-[12px] h-[3px] shrink-0 bg-[#aaaaaa]" />
    <div className="ml-[53px] mt-[13px] flex h-[90px] shrink-0 items-center">
      <ViewBtn name="vertical" />
      <span className="w-[252px] shrink-0 pb-[6px] pl-[9px]">显示垂直上下文</span>
      <div className="flex h-[59px] w-[498px] items-center justify-between rounded-[5px] border-2 border-b-[3px] border-[#b5b5b8] pl-[16px] pr-[14px]">
        无纵面
        <Caret />
      </div>
    </div>
    <div className="ml-[13px] mt-[30px] flex h-[40px] shrink-0 items-center gap-[13px] font-bold text-[#333]">
      <TriRight />
      足迹
    </div>
  </div>
);

const tabs: { label: string; w: string; on?: boolean }[] = [
  { label: "标准", w: "w-[85px]", on: true },
  { label: "线路", w: "w-[87px]", on: true },
  { label: "草图编辑器", w: "w-[171px]" },
  { label: "分析", w: "w-[87px]" },
  { label: "视图", w: "w-[88px]" },
  { label: "AR-VR", w: "w-[121px]" },
  { label: "工具", w: "w-[86px]" },
  { label: "触屏操作", w: "w-[143px]" },
];

const Dock = () => (
  <div className="absolute bottom-0 left-[320px] flex w-[3204px] flex-col text-[#333]">
    <div className="ml-[1192px] flex h-[54px] w-[868px] items-stretch border-t-[3px] border-[#a8a8a8] text-[27px] leading-none">
      {tabs.map((t) => (
        <div key={t.label} className={`${t.w} relative flex items-center justify-center border-r-2 border-[#b5b5b8] ${t.on ? "bg-[#f0f0f0]" : "bg-[#cfd3d4]"}`}>
          {t.label === "标准" && (
            <svg width="20" height="20" viewBox="0 0 20 20" className="absolute left-0 top-0">
              <path d="M0 0h18L0 18z" fill="#3a8dc6" />
            </svg>
          )}
          {t.label}
        </div>
      ))}
    </div>
    <div className="flex h-[192px] overflow-hidden rounded-tl-[8px] border-t-[3px] border-[#a8a8a8] bg-[#f0f0f0]">
      <div className="flex w-[47px] shrink-0 justify-center border-r-2 border-[#bfc2c3] pt-[20px]">
        <svg width="22" height="14" viewBox="0 0 22 14" fill="none">
          <path d="M2 1l9 11 9-11" stroke="#777" strokeWidth="2" />
        </svg>
      </div>
      {tools.map((t) => (
        <React.Fragment key={t.lines.join("")}>
          {t.sep ? (
            <div className="relative flex shrink-0">
              <ToolItem t={t} />
              <div className="absolute bottom-[10px] right-0 top-[20px] w-[2px] bg-[#c9cccd]" />
            </div>
          ) : (
            <ToolItem t={t} />
          )}
        </React.Fragment>
      ))}
      <div className="relative mt-[12px] flex h-[160px] w-[185px] shrink-0 flex-col items-center self-start rounded-[2px] border border-y-[3px] border-[#3a8dc6] pt-[6px]">
        <svg width="80" height="76" viewBox="0 0 80 76" className="block overflow-visible">
          {toolIcons.info}
        </svg>
        <div className="mt-[5px] text-[23px] leading-[30px]">线路信息</div>
      </div>
      {toolsRight.map((t) => (
        <ToolItem key={t.lines[0]} t={t} />
      ))}
    </div>
    <div className="absolute left-[655px] top-[146px]"><SmallCaret /></div>
    <div className="absolute left-[884px] top-[146px]"><SmallCaret /></div>
    <div className="absolute left-[1950px] top-[146px]"><SmallCaret /></div>
    <div className="absolute left-[2180px] top-[146px]"><SmallCaret /></div>
  </div>
);

export default function App() {
  return (
    <div className="relative flex h-[1984px] w-[3840px] flex-col overflow-hidden bg-[#3f657f] font-['Noto_Sans','Noto_Sans_CJK_SC',sans-serif]">
      <header className="flex h-[110px] shrink-0 items-center border-b-[3px] border-t-[3px] border-b-[#8b9197] border-t-[#5c90b2] bg-[#01588a] pl-[38px] pr-[28px] text-white">
        <DsLogo />
        <div className="ml-[242px] flex items-center whitespace-nowrap">
          <span className="text-[39px] font-bold leading-none">3D</span>
          <span className="text-[39px] leading-none">EXPERIENCE</span>
          <div className="mx-[16px] h-[40px] w-[2px] bg-white" />
          <span className="text-[39px] font-medium leading-none">CATIA</span>
          <span className="ml-[12px] text-[34.500px] leading-none">线路草图编辑器</span>
        </div>
        <div className="ml-auto flex items-center">
          <div className="flex flex-col items-end">
            <span className="mb-[2px] mr-[2px] text-[25px] leading-[30px]">002 CIV</span>
            <span className="mr-[-1px] text-[39.500px] leading-[46px]">TEST_DEMO</span>
          </div>
          <svg width="28" height="16" viewBox="0 0 28 16" fill="none" className="ml-[10px] mt-[40px]">
            <path d="M2 2l12 11L26 2" stroke="#fff" strokeWidth="5" />
          </svg>
          <div className="relative ml-[30px] flex h-[65px] w-[65px] items-center justify-center rounded-full bg-[#a0856a] pr-[2px] text-[26px]">
            OC
            <div className="absolute right-[-22px] top-[-3px] flex h-[36px] w-[36px] items-center justify-center rounded-full border-2 border-[#01588a] bg-[#b8bcc2]">
              <div className="h-[10px] w-[10px] rounded-full bg-white" />
            </div>
          </div>
          <svg width="48" height="50" viewBox="0 0 48 50" className="ml-[54px]">
            <path d="M24 0v50M0 25h48" stroke="#fff" strokeWidth="8" />
          </svg>
          <svg width="56" height="56" viewBox="0 0 56 56" fill="none" className="ml-[59px]">
            <path d="M1 54c0-22 14-32 30-32V8l24 22-24 20V36C18 36 8 42 1 54z" stroke="#fff" strokeWidth="4" strokeLinejoin="round" />
          </svg>
          <svg width="56" height="56" viewBox="0 0 56 56" fill="none" className="ml-[54px]">
            <circle cx="28" cy="28" r="25" stroke="#fff" strokeWidth="4" />
            <text x="28" y="41" fontSize="36" fontWeight="700" fill="#fff" textAnchor="middle" fontFamily="Noto Sans">?</text>
          </svg>
        </div>
      </header>
      <div className="flex h-[80px] shrink-0 items-stretch border-b-[3px] border-[#e3e5e8] bg-[#f4f5f7] pr-[26px]">
        <div className="ml-[355px] flex w-[445px] items-center justify-center border-b-[8px] border-[#3a8dc6] pt-[6px] text-[38px] font-bold leading-none text-[#4a4a4a]">
          物理产品00004212
        </div>
        <svg width="28" height="28" viewBox="0 0 28 28" className="ml-[16px] self-center">
          <path d="M14 2v24M2 14h24" stroke="#b8babd" strokeWidth="5" />
        </svg>
        <div className="ml-auto self-center rounded-[2px] border-[3px] border-b-[4px] border-[#01588a] p-[6px]">
          <svg width="44" height="46" viewBox="0 0 44 46">
            <path d="M40 2L29 14M27 3v18h14" fill="none" stroke="#01588a" strokeWidth="6" />
            <path d="M3 44l11-12M17 43V25H3" fill="none" stroke="#01588a" strokeWidth="6" />
          </svg>
        </div>
      </div>

      <main className="relative flex-1 overflow-hidden">
        <svg className="absolute left-0 top-0" width="3840" height="1794" viewBox="0 190 3840 1794">
          {MINOR_X.map((x) => (
            <line key={x} x1={x} x2={x} y1={190} y2={1984} stroke="#3d7c90" strokeWidth="2" strokeDasharray="2 3" />
          ))}
          {MINOR_Y.map((y) => (
            <line key={y} y1={y} y2={y} x1={0} x2={3840} stroke="#3d7c90" strokeWidth="2" strokeDasharray="2 3" />
          ))}
          {MAJOR_X.map((x) => (
            <line key={x} x1={x} x2={x} y1={190} y2={1984} stroke="#368696" strokeWidth="2" />
          ))}
          {MAJOR_Y.map((y) => (
            <line key={y} y1={y} y2={y} x1={0} x2={3840} stroke="#368696" strokeWidth="2" />
          ))}
        </svg>
        <Ruler cls="left-[512px] top-[-15px]" text="-200mm" />
        <Ruler cls="left-[2560px] top-[-15px]" text="100mm" />
        <Ruler cls="left-[3200px] top-[-15px]" text="200mm" />
      </main>

      <Ruler cls="left-[15px] top-[389px]" text="100mm" />
      <Ruler cls="left-[14px] top-[1060px]" text="0mm" />
      <Ruler cls="left-[16px] top-[1730px]" text="-100mm" />
      <Ruler cls="left-[3686px] top-[1730px]" text="-100mm" />

      <div className="absolute left-0 top-[190px] flex h-[44px] w-[500px] items-center justify-end rounded-br-[2px] border-y-[3px] border-[#b8babd] bg-[#f0f0f0] pr-[20px]">
        <svg width="14" height="24" viewBox="0 0 14 24" fill="none">
          <path d="M12 1L2 12l10 11" stroke="#666" strokeWidth="2" />
        </svg>
      </div>
      <div className="absolute left-[499px] top-[190px] h-[75px] w-[11px] border-x-[3px] border-[#7f8a92]" />
      <div className="absolute left-[499px] top-[1660px] h-[73px] w-[11px] border-x-[3px] border-[#7f8a92]" />
      <div className="absolute left-[39px] top-[1697px] h-[25px] w-[415px] border-2 border-[#9eb0bd] bg-[#c9ced3]" />

      <Tree />
      <div className="absolute left-[35px] top-[675px] h-[420px] w-[691px] border-4 border-[#e8202a]" />

      <Compass />
      <Dock />

      <div className="absolute left-[1466px] top-[11px] h-[20px] w-[875px] rounded-t-[6px] bg-white" />
      <AssistantPanel />
      <VisualPanel />
      <CompassLogo />
    </div>
  );
}
